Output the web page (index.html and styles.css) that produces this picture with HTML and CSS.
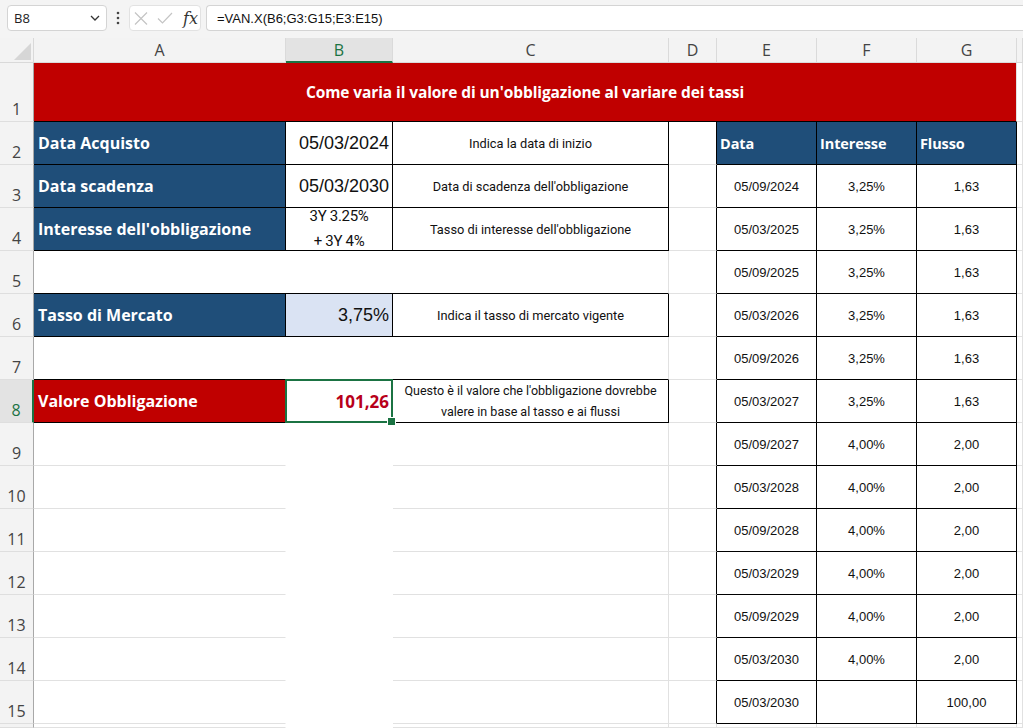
FILE: index.html
```html
<!DOCTYPE html>
<html lang="it">
<head>
<meta charset="utf-8">
<title>Obbligazione</title>
<link rel="stylesheet" href="styles.css">
</head>
<body>
<div class="app">
  <div class="fbar">
    <div class="namebox"><span>B8</span><svg width="10" height="6" viewBox="0 0 10 6"><path d="M1 1l4 4 4-4" fill="none" stroke="#333" stroke-width="1.3"/></svg></div>
    <div class="dots"><svg width="4" height="14" viewBox="0 0 4 14"><circle cx="2" cy="2" r="1.3" fill="#444"/><circle cx="2" cy="7" r="1.3" fill="#444"/><circle cx="2" cy="12" r="1.3" fill="#444"/></svg></div>
    <div class="fnbox">
      <svg class="ico-x" width="14" height="13" viewBox="0 0 14 13"><path d="M1 0.5l12 12M13 0.5L1 12.5" fill="none" stroke="#c4c4c4" stroke-width="1.2"/></svg>
      <svg class="ico-v" width="16" height="12" viewBox="0 0 16 12"><path d="M1 6.5l4.5 4.5L15 1" fill="none" stroke="#c4c4c4" stroke-width="1.2"/></svg>
      <span class="fx">fx</span>
    </div>
    <div class="formula">=VAN.X(B6;G3:G15;E3:E15)</div>
  </div>

  <div class="sheet">
    <!-- header row -->
    <div class="corner"><svg width="34" height="24" viewBox="0 0 34 24"><polygon points="31,5 31,22 14,22" fill="#d6d6d6"/></svg></div>
    <div class="ch">A</div><div class="ch sel">B</div><div class="ch">C</div><div class="ch">D</div><div class="ch">E</div><div class="ch">F</div><div class="ch">G</div><div class="ch"></div>

    <!-- row 1 -->
    <div class="rh">1</div>
    <div class="c kb title">Come varia il valore di un'obbligazione al variare dei tassi</div>
    <div class="c"></div>

    <!-- row 2 -->
    <div class="rh">2</div>
    <div class="c kr kb lab">Data Acquisto</div>
    <div class="c kr kb val">05/03/2024</div>
    <div class="c kr kb note">Indica la data di inizio</div>
    <div class="c kr"></div>
    <div class="c kr kb th">Data</div>
    <div class="c kr kb th">Interesse</div>
    <div class="c kr kb th">Flusso</div>
    <div class="c"></div>

    <!-- row 3 -->
    <div class="rh">3</div>
    <div class="c kr kb lab">Data scadenza</div>
    <div class="c kr kb val">05/03/2030</div>
    <div class="c kr kb note">Data di scadenza dell'obbligazione</div>
    <div class="c kr"></div>
    <div class="c kr kb td">05/09/2024</div>
    <div class="c kr kb td">3,25%</div>
    <div class="c kr kb td">1,63</div>
    <div class="c"></div>

    <!-- row 4 -->
    <div class="rh">4</div>
    <div class="c kr kb lab">Interesse dell'obbligazione</div>
    <div class="c kr kb duo"><span>3Y 3.25%</span><span>+ 3Y 4%</span></div>
    <div class="c kr kb note">Tasso di interesse dell'obbligazione</div>
    <div class="c kr"></div>
    <div class="c kr kb td">05/03/2025</div>
    <div class="c kr kb td">3,25%</div>
    <div class="c kr kb td">1,63</div>
    <div class="c"></div>

    <!-- row 5 -->
    <div class="rh">5</div>
    <div class="c kb span3"></div>
    <div class="c kr"></div>
    <div class="c kr kb td">05/09/2025</div>
    <div class="c kr kb td">3,25%</div>
    <div class="c kr kb td">1,63</div>
    <div class="c"></div>

    <!-- row 6 -->
    <div class="rh">6</div>
    <div class="c kr kb lab">Tasso di Mercato</div>
    <div class="c kr kb val input">3,75%</div>
    <div class="c kr kb note">Indica il tasso di mercato vigente</div>
    <div class="c kr"></div>
    <div class="c kr kb td">05/03/2026</div>
    <div class="c kr kb td">3,25%</div>
    <div class="c kr kb td">1,63</div>
    <div class="c"></div>

    <!-- row 7 -->
    <div class="rh">7</div>
    <div class="c kb span3"></div>
    <div class="c kr"></div>
    <div class="c kr kb td">05/09/2026</div>
    <div class="c kr kb td">3,25%</div>
    <div class="c kr kb td">1,63</div>
    <div class="c"></div>

    <!-- row 8 -->
    <div class="rh rsel">8</div>
    <div class="c kr kb lab lab-red">Valore Obbligazione</div>
    <div class="c kr kb result selcell">101,26</div>
    <div class="c kr kb note wrap">Questo è il valore che l'obbligazione dovrebbe valere in base al tasso e ai flussi</div>
    <div class="c kr"></div>
    <div class="c kr kb td">05/03/2027</div>
    <div class="c kr kb td">3,25%</div>
    <div class="c kr kb td">1,63</div>
    <div class="c"></div>

    <!-- row 9 -->
    <div class="rh">9</div>
    <div class="c ga"></div><div class="c gb"></div><div class="c"></div><div class="c kr"></div>
    <div class="c kr kb td">05/09/2027</div><div class="c kr kb td">4,00%</div><div class="c kr kb td">2,00</div>
    <div class="c"></div>

    <!-- row 10 -->
    <div class="rh">10</div>
    <div class="c ga"></div><div class="c gb"></div><div class="c"></div><div class="c kr"></div>
    <div class="c kr kb td">05/03/2028</div><div class="c kr kb td">4,00%</div><div class="c kr kb td">2,00</div>
    <div class="c"></div>

    <!-- row 11 -->
    <div class="rh">11</div>
    <div class="c ga"></div><div class="c gb"></div><div class="c"></div><div class="c kr"></div>
    <div class="c kr kb td">05/09/2028</div><div class="c kr kb td">4,00%</div><div class="c kr kb td">2,00</div>
    <div class="c"></div>

    <!-- row 12 -->
    <div class="rh">12</div>
    <div class="c ga"></div><div class="c gb"></div><div class="c"></div><div class="c kr"></div>
    <div class="c kr kb td">05/03/2029</div><div class="c kr kb td">4,00%</div><div class="c kr kb td">2,00</div>
    <div class="c"></div>

    <!-- row 13 -->
    <div class="rh">13</div>
    <div class="c ga"></div><div class="c gb"></div><div class="c"></div><div class="c kr"></div>
    <div class="c kr kb td">05/09/2029</div><div class="c kr kb td">4,00%</div><div class="c kr kb td">2,00</div>
    <div class="c"></div>

    <!-- row 14 -->
    <div class="rh">14</div>
    <div class="c ga"></div><div class="c gb"></div><div class="c"></div><div class="c kr"></div>
    <div class="c kr kb td">05/03/2030</div><div class="c kr kb td">4,00%</div><div class="c kr kb td">2,00</div>
    <div class="c"></div>

    <!-- row 15 -->
    <div class="rh">15</div>
    <div class="c ga"></div><div class="c gb"></div><div class="c"></div><div class="c kr"></div>
    <div class="c kr kb td">05/03/2030</div><div class="c kr kb td"></div><div class="c kr kb td">100,00</div>
    <div class="c"></div>

    <!-- row 16 (only a sliver visible) -->
    <div class="rh"></div>
    <div class="c ga"></div><div class="c gb"></div><div class="c"></div><div class="c"></div>
    <div class="c"></div><div class="c"></div><div class="c"></div><div class="c"></div>
  </div>
</div>
</body>
</html>
```

FILE: styles.css
```css
* { box-sizing: border-box; }
html, body { margin: 0; padding: 0; }
body {
  width: 1023px;
  height: 728px;
  overflow: hidden;
  background: #f4f4f4;
  font-family: "Liberation Sans", Arial, sans-serif;
  color: #111;
}
.app { display: flex; flex-direction: column; height: 728px; }

/* formula bar */
.fbar {
  height: 38px;
  flex: none;
  display: flex;
  align-items: center;
  padding: 0 0 2px 7px;
  background: #f4f4f4;
}
.namebox {
  width: 100px;
  height: 26px;
  background: #fff;
  border: 1px solid #d4d4d4;
  border-radius: 4px;
  display: flex;
  align-items: center;
  justify-content: space-between;
  padding: 0 6px 0 6px;
  font-family: "Open Sans", sans-serif;
  font-size: 13px;
  color: #222;
}
.dots { width: 22px; display: flex; justify-content: center; }
.fnbox {
  width: 72px;
  height: 26px;
  background: #fff;
  border: 1px solid #e2e2e2;
  border-radius: 4px;
  display: flex;
  align-items: center;
  padding-left: 4px;
}
.ico-v { margin-left: 9px; }
.fx {
  margin-left: 10px;
  font-family: "DejaVu Serif", "Liberation Serif", serif;
  font-style: italic;
  font-size: 16px;
  color: #333;
}
.formula {
  flex: 1;
  margin-left: 5px;
  height: 26px;
  background: #fff;
  border: 1px solid #d4d4d4;
  border-right: none;
  border-radius: 4px 0 0 4px;
  padding-left: 10px;
  display: flex;
  align-items: center;
  font-family: "Liberation Sans", Arial, sans-serif;
  font-size: 13px;
  color: #111;
}

/* sheet grid */
.sheet {
  flex: 1;
  display: grid;
  grid-template-columns: 34px 252px 107px 276px 48px 100px 100px 100px 1fr;
  grid-template-rows: 25px 59px repeat(14, 43px) 1fr;
  background: #fff;
  overflow: hidden;
}
.corner {
  background: #f3f3f3;
  border-right: 1px solid #d9d9d9;
  border-bottom: 1px solid #d9d9d9;
}
.corner svg { display: block; }
.ch {
  background: #f3f3f3;
  border-right: 1px solid #dadada;
  border-bottom: 1px solid #dadada;
  display: flex;
  align-items: center;
  justify-content: center;
  font-family: "Open Sans", sans-serif;
  font-size: 16px;
  color: #444;
}
.ch.sel {
  background: #e3e3e3;
  color: #1b7343;
  border-bottom: 2px solid #1b7343;
}
.rh {
  background: #f3f3f3;
  border-right: 1px solid #a8a8a8;
  border-bottom: 1px solid #dedede;
  display: flex;
  align-items: flex-end;
  justify-content: center;
  padding-bottom: 2px;
  font-family: "Open Sans", sans-serif;
  font-size: 16px;
  line-height: 20px;
  color: #444;
  overflow: hidden;
}
.rh.rsel {
  background: #e3e3e3;
  color: #1b7343;
  border-right: 2px solid #1b7343;
}

/* cells */
.c {
  border-right: 1px solid #e1e1e1;
  border-bottom: 1px solid #e1e1e1;
  display: flex;
  align-items: center;
  min-width: 0;
  overflow: hidden;
  white-space: nowrap;
}
.kr { border-right-color: #000; }
.kb { border-bottom-color: #000; }
.ga { border-right-color: #fff; }
.gb { border-right-color: #fff; border-bottom-color: #fff; }
.span3 { grid-column: span 3; }

.title {
  grid-column: span 7;
  background: #c00000;
  color: #fff;
  justify-content: center;
  font-family: "Open Sans", sans-serif;
  font-weight: 700;
  font-size: 15.5px;
  letter-spacing: -0.1px;
}
.lab {
  background: #1f4e79;
  color: #fff;
  padding-left: 4px;
  font-family: "Open Sans", sans-serif;
  font-weight: 700;
  font-size: 16px;
  letter-spacing: 0;
}
.lab-red { background: #c00000; }
.val {
  justify-content: flex-end;
  padding-right: 3px;
  font-family: "Liberation Sans", Arial, sans-serif;
  font-size: 18px;
  color: #111;
}
.input { background: #dae3f3; }
.duo {
  flex-direction: column;
  justify-content: center;
  font-family: "Roboto", sans-serif;
  font-size: 15px;
  line-height: 25px;
  letter-spacing: -0.3px;
  color: #111;
}
.result {
  justify-content: flex-end;
  padding-right: 3px;
  font-family: "Open Sans", sans-serif;
  font-weight: 700;
  font-size: 17px;
  color: #b8001a;
}
.selcell { position: relative; z-index: 2; overflow: visible; }
.selcell::after {
  content: "";
  position: absolute;
  left: -1px;
  top: -1px;
  right: -1px;
  bottom: -1px;
  border: 2px solid #1b7343;
}
.selcell::before {
  content: "";
  position: absolute;
  right: -4px;
  bottom: -4px;
  width: 7px;
  height: 7px;
  background: #1b7343;
  border: 1px solid #fff;
  z-index: 3;
}
.note {
  justify-content: center;
  text-align: center;
  font-family: "Roboto", sans-serif;
  font-size: 12.8px;
  color: #111;
}
.note.wrap {
  white-space: normal;
  line-height: 21px;
  padding: 0 6px;
  font-size: 12.5px;
}
.th {
  background: #1f4e79;
  color: #fff;
  padding-left: 3px;
  font-family: "Open Sans", sans-serif;
  font-weight: 700;
  font-size: 14.5px;
  letter-spacing: -0.1px;
}
.td {
  justify-content: center;
  font-family: "Liberation Sans", Arial, sans-serif;
  font-size: 13px;
  color: #111;
}
```
